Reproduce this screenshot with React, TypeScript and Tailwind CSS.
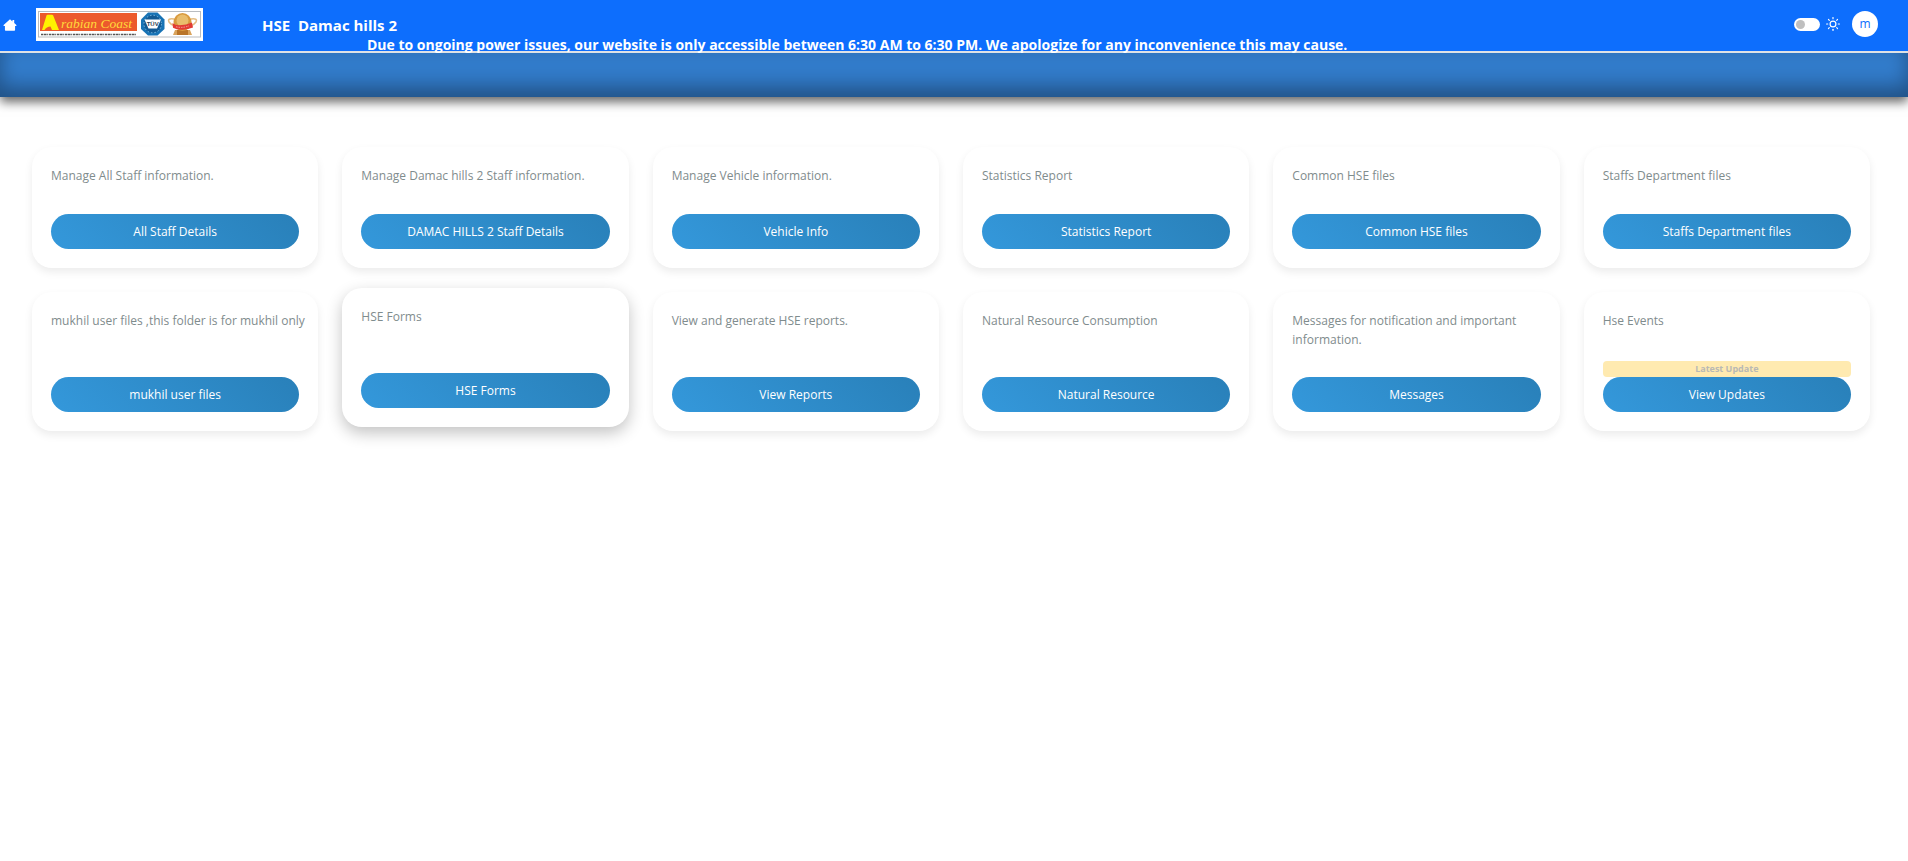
import { FiSun } from "react-icons/fi";

type Item = { text: string; action: string; badge?: string; raised?: boolean };

const items: Item[] = [
  { text: "Manage All Staff information.", action: "All Staff Details" },
  { text: "Manage Damac hills 2 Staff information.", action: "DAMAC HILLS 2 Staff Details" },
  { text: "Manage Vehicle information.", action: "Vehicle Info" },
  { text: "Statistics Report", action: "Statistics Report" },
  { text: "Common HSE files", action: "Common HSE files" },
  { text: "Staffs Department files", action: "Staffs Department files" },
  { text: "mukhil user files ,this folder is for mukhil only", action: "mukhil user files" },
  { text: "HSE Forms", action: "HSE Forms", raised: true },
  { text: "View and generate HSE reports.", action: "View Reports" },
  { text: "Natural Resource Consumption", action: "Natural Resource" },
  { text: "Messages for notification and important information.", action: "Messages" },
  { text: "Hse Events", action: "View Updates", badge: "Latest Update" },
];

function HomeIcon() {
  return (
    <svg viewBox="0 0 16 16" className="size-[14px]" fill="currentColor" aria-hidden="true">
      <path d="M8 1.500 10.800 4V2.400h2v3.400L15.600 8.300 15 9.200h-1.200v4.600q0 .9-.9.9H3.100q-.9 0-.9-.9V9.200H1L.4 8.300z" />
    </svg>
  );
}

function Logo() {
  return (
    <svg viewBox="0 0 167 33" className="h-[33px] w-[167px]" role="img" aria-label="Arabian Coast">
      <rect width="167" height="33" fill="#fff" />
      <rect x="2.5" y="3.5" width="162" height="25.5" fill="none" stroke="#b9bcc0" />
      <rect x="4" y="5" width="97" height="18" fill="#ec5a2c" />
      <path d="M6 22 10.500 7.500q.3-.8 1-.8h4.500q.8 0 1.200.8L23 22h-7l-1.500-3.500q-4 .3-6 3.500z" fill="#fff100" />
      <text x="25" y="20" fontFamily="'Liberation Serif', serif" fontStyle="italic" fontSize="13.5" fill="#ffd93b">
        rabian Coast
      </text>
      <path d="M5 26.500h95" stroke="#555" strokeWidth="1.500" strokeDasharray="2 .6 3 .6 1 .8" />
      <path d="M112 4.500h9.500l7 7v9.500l-7 6.500H112l-7-6.500v-9.500z" fill="#1773b5" />
      <circle cx="116.700" cy="16" r="9" fill="#125a94" />
      <circle cx="116.700" cy="16" r="8.800" fill="none" stroke="#7db8de" strokeDasharray="1.500 2" />
      <path d="M108.500 11.500h16.500l-4 9h-8.500z" fill="#fff" />
      <text x="116.7" y="17.500" textAnchor="middle" fontFamily="'Liberation Sans', sans-serif" fontWeight="700" fontSize="6" fill="#345">
        TÜV
      </text>
      <path d="M138 11q-7-1-5 3 2 3 6 4M155 11q7-1 5 3-2 3-6 4" fill="none" stroke="#e5bd83" strokeWidth="1.500" />
      <path d="m139 22-2 5h19l-2-5z" fill="#d9a35c" />
      <path d="M141 22h11v5h-11z" fill="#b97428" />
      <circle cx="146.500" cy="14" r="9" fill="#d99a3e" />
      <circle cx="146.500" cy="12.500" r="6" fill="#e9bd6c" />
      <path d="M136.500 15q3 2.500 7 2.200 7-.2 12.500-2.700l1 5q-5 2-10.500 2.300-6 .2-9.500-2z" fill="#e23b34" />
      <path d="M140 18.800q7 1.500 13-1" fill="none" stroke="#f6a29c" strokeDasharray="1.500 1" />
    </svg>
  );
}

function Card({ text, action, badge, raised }: Item) {
  return (
    <article
      className={
        "flex min-h-[121px] flex-col rounded-[20px] bg-white p-[19px] " +
        (raised
          ? "-translate-y-1 shadow-[0_6px_16px_rgba(0,0,0,0.24)]"
          : "shadow-[0_4px_8px_rgba(0,0,0,0.08)]")
      }
    >
      <p className={"-mr-2 flex-1 text-[12px] leading-[19px] text-[#7f8c8d] " + (badge ? "mb-3" : "mb-7")}>{text}</p>
      {badge && (
        <span className="rounded bg-[#ffeab0] text-center text-[9px] leading-4 font-bold text-[#b9b9b4]">{badge}</span>
      )}
      <button
        type="button"
        className="h-[35px] w-full rounded-full bg-[linear-gradient(45deg,#3498db,#2980b9)] text-[12px] font-medium text-white"
      >
        {action}
      </button>
    </article>
  );
}

export default function App() {
  return (
    <div className="min-h-screen bg-white font-['Segoe_UI','Open_Sans',sans-serif]">
      <header className="relative flex h-[53px] items-start border-b-2 border-[#dee2e6] bg-[#0d6efd] text-white">
        <a href="#home" aria-label="Home" className="mt-[18px] ml-[3px]">
          <HomeIcon />
        </a>
        <a href="#home" className="mt-2 ml-[19px]">
          <Logo />
        </a>
        <h1 className="mt-[13px] ml-[59px] text-[15px] leading-6 font-bold whitespace-pre">HSE  Damac hills 2</h1>
        <div className="mr-[30px] ml-auto flex items-center gap-[6px] pt-[11px]">
          <label className="flex items-center">
            <input type="checkbox" aria-label="Dark mode" className="peer sr-only" />
            <span className="flex h-[13px] w-[26px] items-center rounded-full bg-white px-[2px] peer-checked:justify-end">
              <span className="size-[9px] rounded-full bg-[#bfbfbf]" />
            </span>
          </label>
          <FiSun className="size-[14px]" />
          <button type="button" className="ml-[6px] size-[26px] rounded-full bg-white text-[12px] text-[#0d6efd]">
            m
          </button>
        </div>
        <p className="absolute top-[35px] left-[367px] text-[14px] leading-5 font-bold whitespace-nowrap">
          Due to ongoing power issues, our website is only accessible between 6:30 AM to 6:30 PM. We apologize for any
          inconvenience this may cause.
        </p>
      </header>
      <div className="h-11 bg-[#327ccb] shadow-[inset_0_-10px_20px_rgba(0,0,0,0.35),0_5px_10px_rgba(0,0,0,0.6)]" />
      <main className="grid grid-cols-6 gap-6 pt-[50px] pr-[38px] pb-8 pl-8">
        {items.map((item) => (
          <Card key={item.text} {...item} />
        ))}
      </main>
    </div>
  );
}
